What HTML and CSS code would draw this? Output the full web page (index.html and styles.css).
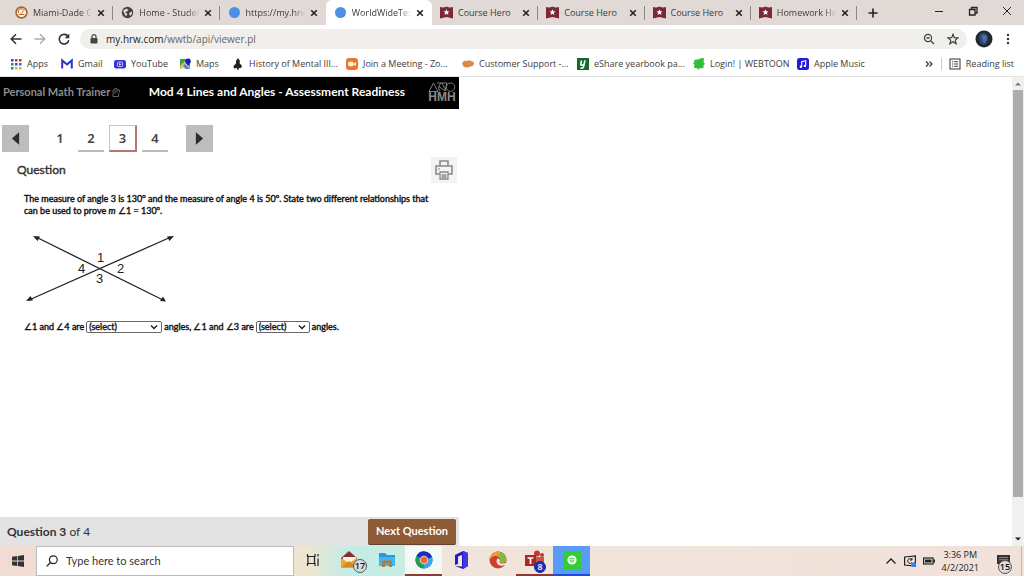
FILE: index.html
```html
<!DOCTYPE html>
<html lang="en">
<head>
<meta charset="utf-8">
<title>WorldWideTestbook</title>
<link rel="stylesheet" href="styles.css">
</head>
<body>
<svg class="defs" aria-hidden="true">
  <symbol id="shield" viewBox="0 0 13 13"><path d="M0 1Q3.500 2 6.500 .5Q9.500 2 13 1V12.500L6.500 11L0 12.500Z" fill="#7c2636"/><path d="M6.500 3.200L7.400 5.200L9.500 5.400L7.900 6.800L8.400 8.900L6.500 7.800L4.600 8.900L5.100 6.800L3.500 5.400L5.600 5.200Z" fill="#fff"/></symbol>
  <symbol id="dot" viewBox="0 0 13 13"><circle cx="6.500" cy="6.500" r="5.500" fill="#4a90e8"/></symbol>
  <symbol id="cross" viewBox="0 0 8 8"><path d="M1.200 1.200L6.800 6.800M6.800 1.200L1.200 6.800" stroke="#222" stroke-width="1.600"/></symbol>
</svg>

<header class="browser">
  <div class="titlebar">
    <nav class="tabs" aria-label="Tabs">
      <div class="tab"><svg class="tab-icon" viewBox="0 0 13 13"><circle cx="6.500" cy="6.500" r="5.400" fill="#fff6e8" stroke="#a9622c" stroke-width="1.600"/><path d="M3.500 7A3 3 0 0 1 9 4.500M3.500 8.500H9.500M6 7.500L9 4.500" stroke="#b36424" fill="none"/></svg><a class="tab-title fade" href="#">Miami-Dade C</a><button class="tab-close" aria-label="Close tab"><svg viewBox="0 0 8 8"><use href="#cross"/></svg></button></div>
      <div class="tab"><svg class="tab-icon" viewBox="0 0 13 13"><circle cx="6.500" cy="6.500" r="5.700" fill="#414141"/><path d="M2 4.500L5.500 2.500L7.500 4L6 5.500L4 6L6.500 8L5 10.500L3.500 8ZM8 7L11 5.500L11 8L9 10Z" fill="#ddd6d3"/></svg><a class="tab-title fade" href="#">Home - Studen</a><button class="tab-close" aria-label="Close tab"><svg viewBox="0 0 8 8"><use href="#cross"/></svg></button></div>
      <div class="tab last"><svg class="tab-icon"><use href="#dot"/></svg><a class="tab-title fade" href="#">https://my.hrw</a><button class="tab-close" aria-label="Close tab"><svg viewBox="0 0 8 8"><use href="#cross"/></svg></button></div>
      <div class="tab active"><svg class="tab-icon"><use href="#dot"/></svg><a class="tab-title fade" href="#">WorldWideTest</a><button class="tab-close" aria-label="Close tab"><svg viewBox="0 0 8 8"><use href="#cross"/></svg></button></div>
      <div class="tab"><svg class="tab-icon"><use href="#shield"/></svg><a class="tab-title" href="#">Course Hero</a><button class="tab-close" aria-label="Close tab"><svg viewBox="0 0 8 8"><use href="#cross"/></svg></button></div>
      <div class="tab"><svg class="tab-icon"><use href="#shield"/></svg><a class="tab-title" href="#">Course Hero</a><button class="tab-close" aria-label="Close tab"><svg viewBox="0 0 8 8"><use href="#cross"/></svg></button></div>
      <div class="tab"><svg class="tab-icon"><use href="#shield"/></svg><a class="tab-title" href="#">Course Hero</a><button class="tab-close" aria-label="Close tab"><svg viewBox="0 0 8 8"><use href="#cross"/></svg></button></div>
      <div class="tab"><svg class="tab-icon"><use href="#shield"/></svg><a class="tab-title fade" href="#">Homework Hel</a><button class="tab-close" aria-label="Close tab"><svg viewBox="0 0 8 8"><use href="#cross"/></svg></button></div>
    </nav>
    <button class="new-tab" aria-label="New tab"><svg viewBox="0 0 10 10"><path d="M5 .5V9.500M.5 5H9.500" stroke="#222" stroke-width="1.600"/></svg></button>
    <div class="window-controls">
      <button aria-label="Minimize"><svg viewBox="0 0 10 10"><path d="M1 5.500H9" stroke="#222"/></svg></button>
      <button aria-label="Restore"><svg viewBox="0 0 10 10"><path d="M1.500 3.500H7V9H1.500ZM3.500 3V1.500H9V7H7.500" fill="none" stroke="#222" stroke-width="1.300"/></svg></button>
      <button aria-label="Close"><svg viewBox="0 0 10 10"><path d="M1 1L9 9M9 1L1 9" stroke="#222"/></svg></button>
    </div>
  </div>

  <div class="toolbar">
    <button aria-label="Back"><svg viewBox="0 0 12 12"><path d="M11.500 6H1.500M6 1.200L1.200 6L6 10.800" fill="none" stroke="#333" stroke-width="1.500"/></svg></button>
    <button aria-label="Forward"><svg viewBox="0 0 12 12"><path d="M.5 6H10.500M6 1.200L10.800 6L6 10.800" fill="none" stroke="#aaa" stroke-width="1.300"/></svg></button>
    <button aria-label="Reload"><svg viewBox="0 0 12 12"><path d="M10 3.300A4.800 4.800 0 1 0 10.800 7.200" fill="none" stroke="#333" stroke-width="1.600"/><path d="M11.300 .5V5.200H6.700Z" fill="#333"/></svg></button>
    <div class="address">
      <svg class="lock" viewBox="0 0 8 10"><rect x=".5" y="4" width="7" height="5.500" rx=".8" fill="#444"/><path d="M2 4V2.600A2 2 0 0 1 6 2.600V4" fill="none" stroke="#444" stroke-width="1.200"/></svg>
      <span class="url">my.hrw.com<span class="path">/wwtb/api/viewer.pl</span></span>
      <button aria-label="Zoom"><svg viewBox="0 0 12 12"><circle cx="5" cy="5" r="3.600" fill="none" stroke="#444" stroke-width="1.200"/><path d="M3.400 5H6.600M7.700 7.700L11 11" stroke="#444" stroke-width="1.300"/></svg></button>
      <button aria-label="Bookmark this page"><svg viewBox="0 0 12 12"><path d="M6 1.300L7.300 4.600L11 4.800L8.200 7.100L9.100 10.700L6 8.700L2.900 10.700L3.800 7.100L1 4.800L4.700 4.600Z" fill="none" stroke="#333" stroke-width="1.100"/></svg></button>
    </div>
    <button class="avatar" aria-label="Profile"><svg viewBox="0 0 18 18"><circle cx="9" cy="9" r="8.500" fill="#24272e"/><path d="M4 7Q5 2 10 3Q14 5 13 10Q12 15 8 15Q4 13 4 7Z" fill="#2c4877"/><path d="M7 5Q11 4 12 8L10 13Q7 12 7 5" fill="#4b70ad"/></svg></button>
    <button class="more" aria-label="Menu"><svg viewBox="0 0 12 12"><g fill="#333"><circle cx="6" cy="2" r="1.200"/><circle cx="6" cy="6" r="1.200"/><circle cx="6" cy="10" r="1.200"/></g></svg></button>
  </div>

  <nav class="bookmarks" aria-label="Bookmarks">
    <a href="#"><svg viewBox="0 0 12 12"><g fill="#2d50c8"><path d="M1 1h2.500v2.500H1zM5 5h2.500v2.500H5z"/></g><path d="M5 1h2.500v2.500H5zM9 1h2.500v2.500H9z" fill="#c03a2a"/><path d="M1 5h2.500v2.500H1zM1 9h2.500v2.500H1z" fill="#2a9048"/><path d="M9 5h2.500v2.500H9z" fill="#3262dc"/><path d="M5 9h2.500v2.500H5zM9 9h2.500v2.500H9z" fill="#e8b030"/></svg>Apps</a>
    <a href="#"><svg viewBox="0 0 12 12"><path d="M1.200 10.500V2.500L6 6.500L10.800 2.500V10.500" fill="none" stroke="#2b32d6" stroke-width="2"/><path d="M.3 2.500L2 1.500L3 3.500Z" fill="#a83a50"/></svg>Gmail</a>
    <a href="#"><svg viewBox="0 0 12 12"><rect x="0" y="2" width="12" height="8.500" rx="2.200" fill="#3532dd"/><rect x="3.500" y="4" width="5" height="4.500" rx="1" fill="none" stroke="#fff" stroke-width=".7"/><path d="M5.200 5L7.400 6.200L5.200 7.400Z" fill="#fff"/></svg>YouTube</a>
    <a href="#"><svg viewBox="0 0 12 12"><path d="M1 1H11V11H1Z" fill="#31a354"/><path d="M1 11L8 4L11 11Z" fill="#e9dfc6"/><path d="M1 8L8 1H11L1 11Z" fill="#e4c23d"/><path d="M6 6L11 11H7L4 8Z" fill="#4b83d8"/><path d="M9 8L6.500 4.500A2.800 2.800 0 1 1 11.500 4.500Z" fill="#1919c8"/></svg>Maps</a>
    <a href="#"><svg viewBox="0 0 12 12"><path d="M6 0L8 3L7.500 5L10 8L9 10H7L6.500 12H5.500L5 10L2 10.500L1.500 8L4 5.500V3Z" fill="#222"/></svg>History of Mental Ill...</a>
    <a href="#"><svg viewBox="0 0 12 12"><rect width="12" height="12" rx="3" fill="#f07424"/><rect x="2.300" y="3.800" width="5" height="4.500" rx="1" fill="#fff"/><path d="M7.700 5.500L9.800 4V8L7.700 6.700Z" fill="#fff"/></svg>Join a Meeting - Zo...</a>
    <a href="#"><svg viewBox="0 0 12 12"><path d="M1 4Q2 2 5 3Q7 1.500 9 3Q12 3 12 6Q11 9 8 8.500Q6 10.500 4 9Q1 10 1 7Q-.5 5.500 1 4Z" fill="#d98a46"/></svg>Customer Support -...</a>
    <a href="#"><svg viewBox="0 0 12 12"><rect width="12" height="12" fill="#14682a"/><path d="M4.500 2.500L3.800 6Q3.500 7.500 5 7.300Q6.500 7.200 7 6L8 2.500L6.500 9Q6 10.500 3.500 10" fill="none" stroke="#fff" stroke-width="1.600"/></svg>eShare yearbook pa...</a>
    <a href="#"><svg viewBox="0 0 12 12"><path d="M1 2L5 1.500L7 .5L11 0L10.500 4L12 6L10.500 7V10L6 10.500L5 12L4 10H1L1.500 7L0 5L1.500 4Z" fill="#34bd3c"/></svg>Login! | WEBTOON</a>
    <a href="#"><svg viewBox="0 0 12 12"><rect width="12" height="12" rx="2.500" fill="#2618e0"/><path d="M4.700 8.700V3.700L8.700 2.800V7.800" fill="none" stroke="#fff" stroke-width="1.100"/><circle cx="3.900" cy="8.800" r="1.200" fill="#fff"/><circle cx="7.900" cy="7.900" r="1.200" fill="#fff"/></svg>Apple Music</a>
    <button class="overflow" aria-label="More bookmarks"><svg viewBox="0 0 8 8"><path d="M1 1.500L3.500 4L1 6.500M4.500 1.500L7 4L4.500 6.500" fill="none" stroke="#333" stroke-width="1.200"/></svg></button>
    <a class="reading" href="#"><svg viewBox="0 0 12 12"><rect x="1" y="1" width="10" height="10" fill="none" stroke="#444" stroke-width="1.100"/><path d="M3 3.700H4.200M5.200 3.700H9M3 6H4.200M5.200 6H9M3 8.300H4.200M5.200 8.300H9" stroke="#444"/></svg>Reading list</a>
  </nav>
</header>

<div class="viewport">
  <main class="trainer">
    <header class="trainer-head">
      <span class="brand">Personal Math Trainer <svg viewBox="0 0 8 10"><path d="M1 3V9.500H6.500V6M1 3Q3 .5 5 1.500V5.500M3 2.500V7M5 3H7.500V5.500" fill="none" stroke="#777" stroke-width=".8"/></svg></span>
      <h1>Mod 4 Lines and Angles - Assessment Readiness</h1>
      <div class="hmh"><svg viewBox="0 0 28 10"><path d="M1 9.500L5.500 1L10 9.500ZM9 1H19L17 9L11 4.500M12 9.500Q9 5 13 1M14 1L18 9" fill="none" stroke="#8a8a8a" stroke-width=".9"/><circle cx="22.500" cy="5.200" r="4.200" fill="none" stroke="#8a8a8a" stroke-width=".9"/></svg><span>HMH</span></div>
    </header>

    <nav class="pager" aria-label="Questions">
      <button class="step" aria-label="Previous question"><svg viewBox="0 0 10 14"><path d="M9 0V14L1 7Z" fill="#2c2c2c"/></svg></button>
      <div class="pages">
        <a class="plain" href="#">1</a><a href="#">2</a><a class="current" href="#" aria-current="page">3</a><a href="#">4</a>
      </div>
      <button class="step" aria-label="Following question"><svg viewBox="0 0 10 14"><path d="M1 0V14L9 7Z" fill="#2c2c2c"/></svg></button>
    </nav>

    <div class="question-head">
      <h2>Question</h2>
      <button class="print" aria-label="Print"><svg viewBox="0 0 20 22"><path d="M6 7V2H14V7M6 15H2V7H18V15H14" fill="none" stroke="#8b8b8b" stroke-width="1.600"/><path d="M6 13H14V20H6ZM7.500 16H12.500M7.500 18H12.500" fill="none" stroke="#8b8b8b" stroke-width="1.300"/><path d="M4 10H6" stroke="#8b8b8b"/></svg></button>
    </div>

    <section class="question">
      <p>The measure of angle 3 is 130<sup>o</sup> and the measure of angle 4 is 50<sup>o</sup>. State two different relationships that can be used to prove <i>m</i> ∠1 = 130<sup>o</sup>.</p>
      <svg class="figure" viewBox="0 0 152 70" role="img" aria-label="Two intersecting lines forming angles 1, 2, 3 and 4">
        <path d="M12 4L139 67M147 4L5 67" stroke="#222" stroke-width="1.300"/>
        <path d="M9 3L16 3.500L13.500 8ZM142 68.500L139 63.500L136 68ZM150 3L143 3.500L145.500 8ZM2 68L9 67.500L6.500 63Z" fill="#222"/>
        <text x="73" y="29">1</text><text x="93" y="40">2</text><text x="72" y="50">3</text><text x="54" y="40">4</text>
      </svg>
      <div class="answer">
        <label for="pair-a">∠1 and ∠4 are</label>
        <select id="pair-a" class="wide"><option>(select)</option></select>
        <label for="pair-b">angles, ∠1 and ∠3 are</label>
        <select id="pair-b"><option>(select)</option></select>
        <span>angles.</span>
      </div>
    </section>

    <footer class="trainer-foot">
      <span><b>Question 3</b> of 4</span>
      <button class="next">Next Question</button>
    </footer>
  </main>
  <div class="scrollbar" aria-hidden="true">
    <svg viewBox="0 0 8 8"><path d="M1 5.500L4 2.500L7 5.500Z" fill="#777"/></svg>
    <div class="thumb"></div>
    <svg class="down" viewBox="0 0 8 8"><path d="M1 2.500L4 5.500L7 2.500Z" fill="#222"/></svg>
  </div>
</div>

<footer class="taskbar">
  <button class="start" aria-label="Start"><svg viewBox="0 0 12 12"><path d="M0 1.700L5.300 1V5.600H0ZM6 .9L12 0V5.600H6ZM0 6.400H5.300V11L0 10.300ZM6 6.400H12V12L6 11.100Z" fill="#333"/></svg></button>
  <label class="search"><svg viewBox="0 0 12 12"><circle cx="7.300" cy="4.700" r="3.900" fill="none" stroke="#222" stroke-width="1.200"/><path d="M4.500 7.500L.6 11.400" stroke="#222" stroke-width="1.300"/></svg><input type="text" placeholder="Type here to search" aria-label="Type here to search"></label>
  <div class="apps">
    <button aria-label="Task View"><svg class="small" viewBox="0 0 14 14"><path d="M1.500 1V3.500H9V1M1.500 13V10.500H9V13M2 3.500V10.500M8.500 3.500V10.500M12 5.500V13M12 1V3.500" fill="none" stroke="#222" stroke-width="1.200"/></svg></button>
    <button aria-label="Mail"><svg viewBox="0 0 20 20"><path d="M1 8L9 1L17 8V17H1Z" fill="#8c2f22"/><path d="M3 7H16V13H3Z" fill="#f8f3ec"/><path d="M1 8L9 13L17 8V17.500H1Z" fill="#eda52e"/><path d="M1 17.500L9 11L17 17.500Z" fill="#d8891c"/></svg><span class="badge">17</span></button>
    <button aria-label="File Explorer"><svg viewBox="0 0 20 20"><path d="M2 3H8L10 5H18V16H2Z" fill="#259bdc"/><path d="M2 7H18V16H2Z" fill="#43b5ee"/><path d="M5 17V12Q5 10.500 7 10.500H13Q15 10.500 15 12V17H12V13.500H8V17Z" fill="#b37d38"/></svg></button>
    <button class="open" aria-label="Chrome"><svg viewBox="0 0 20 20"><circle cx="10" cy="10" r="8.500" fill="#2148d8"/><path d="M10 10L2.600 5.700A8.500 8.500 0 0 0 9.500 18.500Z" fill="#249a55"/><path d="M10 10L9.500 18.500A8.500 8.500 0 0 0 18 7Z" fill="#38a8e8"/><path d="M10 10L2.600 5.700A8.500 8.500 0 0 1 18 7Z" fill="#1b2cc0"/><circle cx="10" cy="10" r="4.300" fill="#dfe8f8"/><circle cx="10" cy="10" r="3.500" fill="#ee6b35"/></svg></button>
    <button aria-label="Office"><svg viewBox="0 0 20 20"><path d="M4 5L12 1L17 3V16L12 19L4 16L11 16.500V5L7 6.500V14L4 15Z" fill="#271ac4"/><path d="M12 1L17 3V16L12 19Z" fill="#4338e2"/></svg></button>
    <button aria-label="Edge"><svg viewBox="0 0 20 20"><circle cx="10" cy="10" r="8.500" fill="#cf3f2e"/><path d="M4 4A8.500 8.500 0 0 1 18.500 10Q18 13 14 13Q11 13 12 10Q11 6 7 5.500Z" fill="#86b83a"/><path d="M1.500 10A8.500 8.500 0 0 1 11 1.600Q13 4 10 6Q5 4.500 1.500 10Z" fill="#e9a13b"/><path d="M9 9Q7 15 14 16L18 14Q19 13 17 13Q10 14.500 12 10Q10 7.500 9 9Z" fill="#f3e3da"/></svg></button>
    <button class="running" aria-label="Teams"><svg viewBox="0 0 20 20"><circle cx="12" cy="3.500" r="3" fill="#bb3b32"/><circle cx="17" cy="5" r="2" fill="#bb3b32"/><path d="M8 7H19V14Q16 18 10 17Z" fill="#cb5349"/><rect x="0" y="5" width="11" height="11" fill="#a92822"/><path d="M2.500 8H8.500M5.500 8V14" stroke="#fff" stroke-width="1.700"/></svg><span class="badge blue">8</span></button>
    <button class="spotify" aria-label="Spotify"><svg viewBox="0 0 20 20"><rect x="1" y="1" width="18" height="18" fill="#32cc34"/><circle cx="10" cy="10" r="4.600" fill="#fff"/><path d="M7.300 8.500Q10 7.500 12.800 9M7.700 10.300Q10 9.500 12.300 10.700M8 12Q10 11.300 11.800 12.200" fill="none" stroke="#32cc34" stroke-width=".9"/></svg></button>
  </div>
  <div class="tray">
    <button aria-label="Show hidden icons"><svg viewBox="0 0 12 12"><path d="M1.500 8.500L6 4L10.500 8.500" fill="none" stroke="#222" stroke-width="1.300"/></svg></button>
    <button aria-label="Display"><svg viewBox="0 0 12 12"><path d="M.6 2L11.400 .8V11L.6 10Z" fill="none" stroke="#222" stroke-width="1.200"/><path d="M8 4.500A2.400 2.400 0 1 0 8 7.500M8 3V5H6" fill="none" stroke="#222"/><circle cx="9.700" cy="9.700" r="2.500" fill="#3383f3"/></svg></button>
    <button aria-label="Battery"><svg viewBox="0 0 12 12"><rect x=".6" y="3" width="9.500" height="6" fill="none" stroke="#222" stroke-width="1.200"/><path d="M2 4.500H8.500V7.500H2ZM10.500 4.500H12V7.500H10.500Z" fill="#222"/></svg></button>
    <time class="clock" datetime="2021-04-02T15:36"><span>3:36 PM</span><span>4/2/2021</span></time>
    <button class="notices" aria-label="Notifications"><svg viewBox="0 0 14 14"><path d="M0 1H13V10H5L2 13V10H0Z" fill="#333"/><path d="M2 3.500H11M2 5.700H11" stroke="#aaa" stroke-width=".7"/></svg><span class="badge">15</span></button>
  </div>
</footer>
</body>
</html>
```

FILE: styles.css
```css
* { box-sizing: border-box; }
body {
  margin: 0;
  min-height: 100vh;
  display: flex;
  flex-direction: column;
  background: #fff;
  color: #3c3c3c;
  font: 9px/12px "Open Sans", "Noto Sans", sans-serif;
}
button { border: 0; padding: 0; background: none; font: inherit; color: inherit; display: flex; align-items: center; justify-content: center; }
a { color: inherit; text-decoration: none; }
svg { display: block; flex: none; }
.defs { width: 0; height: 0; position: absolute; }

.titlebar { display: flex; height: 25px; padding-left: 7px; background: #e0d9d6; }
.tabs { display: flex; flex: 0 1 850px; min-width: 0; }
.tab { flex: 1 1 0; min-width: 0; display: flex; align-items: center; gap: 5px; padding: 0 8px; position: relative; }
.tab::after { content: ""; position: absolute; right: 0; top: 6px; height: 14px; border-right: 1px solid #8d8886; }
.tab.last::after, .tab.active::after { display: none; }
.tab.active { background: #fff; border-radius: 6px 6px 0 0; }
.tab-icon { width: 13px; height: 13px; }
.tab-title { flex: 1; min-width: 0; overflow: hidden; white-space: nowrap; }
.tab-title.fade { -webkit-mask-image: linear-gradient(90deg, #000 80%, transparent); mask-image: linear-gradient(90deg, #000 80%, transparent); }
.tab-close svg { width: 8px; height: 8px; }
.new-tab { width: 32px; }
.new-tab svg { width: 10px; height: 10px; }
.window-controls { display: flex; margin-left: auto; height: 22px; }
.window-controls button { width: 34px; }
.window-controls svg { width: 10px; height: 10px; }

.toolbar { display: flex; align-items: center; height: 27px; padding: 0 10px; gap: 12px; }
.toolbar svg { width: 12px; height: 12px; }
.address { flex: 1; display: flex; align-items: center; gap: 12px; height: 20px; padding: 0 8px 0 10px; margin: 0 4px 0 -2px; border-radius: 10px; background: #f1efec; }
.address .lock { width: 8px; height: 10px; }
.url { flex: 1; font-size: 10px; line-height: 14px; color: #222; margin-left: -4px; }
.path { color: #666; }
.toolbar .avatar svg { width: 18px; height: 18px; }
.toolbar .avatar { margin: 0 -3px 0 -8px; }

.bookmarks {
  display: grid;
  grid-template-columns: 51px 53px 65px 53px 114px 116px 115px 116px 104px 1fr auto auto;
  align-items: center;
  height: 25px;
  padding: 0 10px 1px;
  border-bottom: 1px solid #e2e2e2;
}
.bookmarks a { display: flex; align-items: center; gap: 5px; white-space: nowrap; }
.bookmarks svg { width: 12px; height: 12px; }
.overflow { padding: 0 8px; }
.bookmarks .overflow svg { width: 8px; height: 8px; }
.bookmarks .reading { border-left: 1px solid #ccc; padding-left: 7px; }

.viewport { flex: 1; display: flex; }
.trainer { flex: 0 1 459px; display: flex; flex-direction: column; margin-right: auto; font-family: Lato, "Noto Sans", sans-serif; }
.trainer-head { display: flex; align-items: center; height: 32px; padding: 0 3px 2px; background: #000; }
.brand { display: flex; align-items: center; gap: 2px; flex: 1; color: #8c8c8c; font-size: 11px; font-weight: 700; white-space: nowrap; }
.brand svg { width: 8px; height: 10px; }
h1 { margin: 0; color: #fff; font-size: 12px; line-height: 16px; font-weight: 700; white-space: nowrap; }
.hmh { width: 28px; margin-left: 23px; color: #8a8a8a; font: 700 12px/11px "Liberation Sans", sans-serif; text-align: center; }
.hmh svg { width: 28px; height: 10px; }

.pager { display: flex; align-items: center; gap: 18px; padding: 16px 2px 0; }
.step { width: 27px; height: 27px; background: #bdbdbd; }
.step svg { width: 9px; height: 13px; }
.pages { display: flex; gap: 5px; align-items: center; font-family: "Noto Sans", sans-serif; font-size: 13px; line-height: 24px; font-weight: 600; color: #444; }
.pages a { width: 26px; text-align: center; border-bottom: 2px solid #bbb; }
.pages a.plain { border-color: transparent; }
.pages a.current { width: 28px; border: 1px solid #c4c4c4; border-right: 2px solid #b57477; border-bottom: 2px solid #b57477; }

.question-head { display: flex; align-items: center; justify-content: space-between; padding: 5px 2px 0 17px; }
h2 { margin: 0; font-size: 12px; line-height: 16px; font-weight: 400; color: #333; -webkit-text-stroke: 0.4px #333; }
.print { width: 26px; height: 26px; background: #f3f3f3; }
.print svg { width: 20px; height: 22px; }

.question { padding: 10px 24px 0; color: #111; font-weight: 400; -webkit-text-stroke: 0.4px #111; }
.question p { margin: 0; max-width: 405px; }
sup { font-size: 6px; line-height: 0; }
.figure { width: 152px; height: 70px; margin: 16px 0 0; -webkit-text-stroke: 0; }
.figure text { font: 13px "Liberation Sans", sans-serif; fill: #222; }
.answer { display: flex; align-items: center; gap: 2px; margin-top: 18px; white-space: nowrap; }
select { appearance: none; width: 54px; height: 12px; padding: 0 2px; border: 1px solid #666; border-radius: 2px; background: #fff url("data:image/svg+xml,%3Csvg xmlns='http://www.w3.org/2000/svg' viewBox='0 0 8 6'%3E%3Cpath d='M1 1.500L4 4.500L7 1.500' fill='none' stroke='%23222' stroke-width='1.500'/%3E%3C/svg%3E") right 3px center / 8px 6px no-repeat; color: #222; font: 9px/10px Lato, sans-serif; }
select.wide { width: 76px; }

.trainer-foot { display: flex; align-items: center; justify-content: space-between; margin-top: auto; height: 29px; padding: 0 3px 0 7px; background: #e3e3e3; color: #333; font-size: 12px; line-height: 16px; }
.next { height: 26px; padding: 0 8px; border-radius: 2px; background: #8f5b37; border-bottom: 1px solid #5f432f; color: #fff; font-weight: 700; font-size: 11px; }

.scrollbar { width: 12px; background: #f0f0f0; display: flex; flex-direction: column; align-items: center; padding: 3px 0; gap: 2px; }
.scrollbar svg { width: 8px; height: 8px; }
.thumb { width: 10px; flex: 0 1 88%; background: #adadad; }
.scrollbar .down { margin-top: auto; }

.taskbar { display: flex; height: 30px; background: linear-gradient(90deg, #f0dcd2 0, #f0e1d4 28%, #efe6cf 30%, #c2ece6 34%, #c8ece4 39%, #f0e5dc 43%, #f0e2da 100%); }
.start { width: 36px; }
.start svg { width: 12px; height: 12px; }
.search { width: 258px; display: flex; align-items: center; gap: 8px; padding: 0 9px; background: #fff; border: 1px solid #bbb; color: #222; }
.search svg { width: 12px; height: 12px; }
.search input { flex: 1; min-width: 0; border: 0; padding: 0; outline: 0; font: 11px/16px Lato, sans-serif; color: #333; }
.search input::placeholder { color: #333; opacity: 1; }
.apps { display: flex; }
.apps button { width: 37px; position: relative; border-bottom: 2px solid transparent; }
.apps svg { width: 20px; height: 20px; }
.apps svg.small { width: 14px; height: 14px; }
.apps .open { background: #f3faf5; border-color: #8e3b2e; }
.apps .running { border-color: #8e3b2e; }
.apps .spotify { background: #589cf5; border-color: #1a4de0; }
.badge { position: absolute; right: 1px; bottom: 1px; min-width: 14px; height: 14px; border: 1px solid #555; border-radius: 7px; background: #ddd; color: #111; font-size: 9px; line-height: 12px; font-weight: 600; text-align: center; }
.badge.blue { right: 7px; min-width: 12px; height: 12px; line-height: 10px; background: #1c2bb0; border-color: #1c2bb0; color: #fff; }
.tray { display: flex; align-items: center; gap: 7px; margin-left: auto; padding-right: 2px; }
.tray svg { width: 12px; height: 12px; }
.clock { display: flex; flex-direction: column; text-align: center; line-height: 13px; color: #222; }
.notices { width: 36px; height: 30px; position: relative; border-right: 1px solid #bbb; }
.tray .notices svg { width: 14px; height: 14px; }
.notices .badge { right: 9px; bottom: 2px; }
```
